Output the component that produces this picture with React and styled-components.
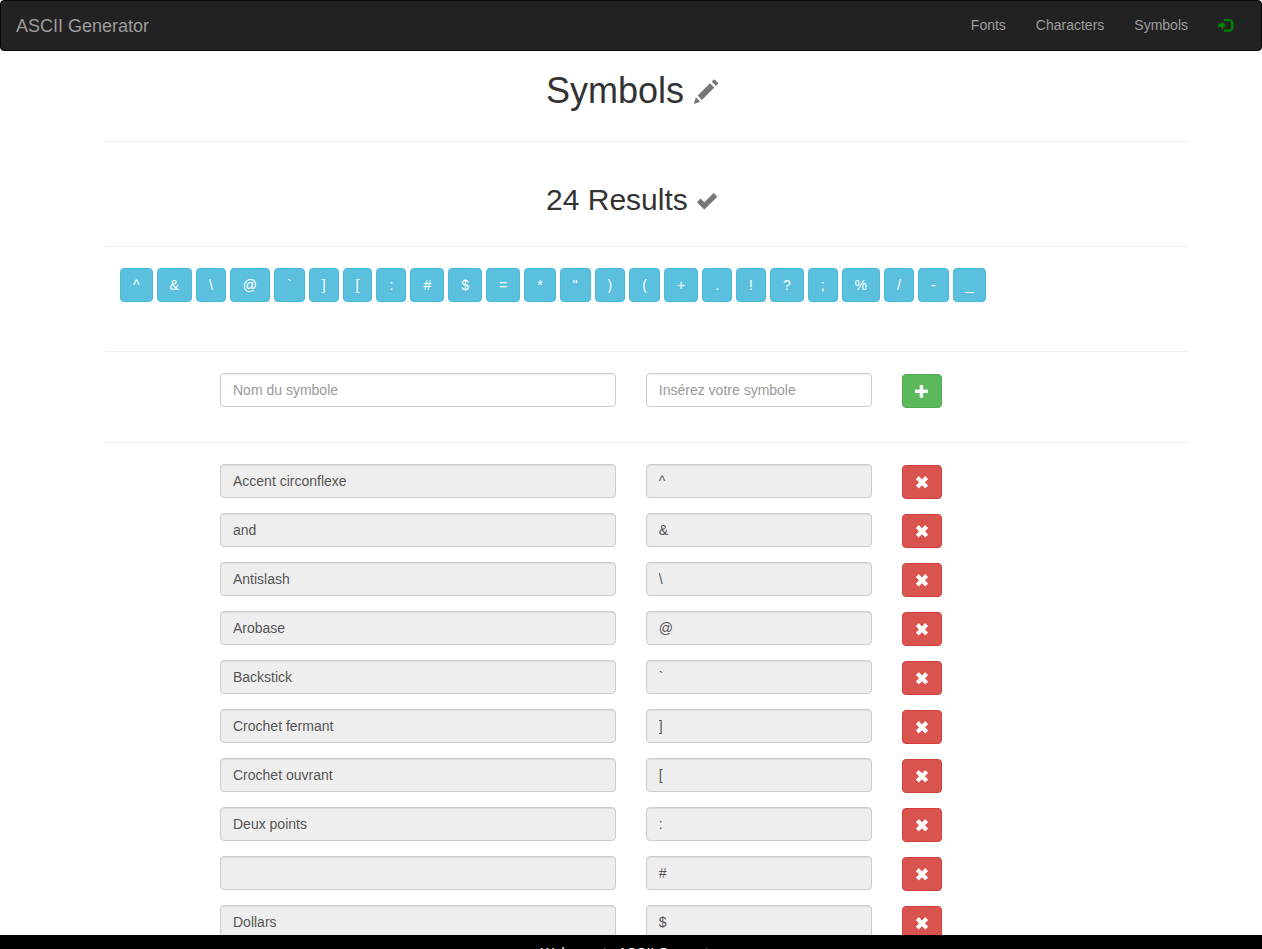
import React from 'react';
import styled, { createGlobalStyle } from 'styled-components';

const GlobalStyle = createGlobalStyle`
  * { box-sizing: border-box; }
  body {
    margin: 0;
    font-family: "Liberation Sans", Arial, sans-serif;
    font-size: 14px;
    line-height: 20px;
    color: #333;
    background: #fff;
  }
  button, input { font: inherit; }
`;

const Page = styled.div`
  display: flex;
  flex-direction: column;
  height: 100vh;
`;

const Navbar = styled.nav`
  display: flex;
  flex: none;
  align-items: center;
  justify-content: space-between;
  min-height: 51px;
  padding: 0 14px 0 15px;
  background: #222;
  border: 1px solid #080808;
  border-radius: 4px;
`;

const Brand = styled.a`
  font-size: 18px;
  color: #9d9d9d;
  text-decoration: none;
`;

const NavList = styled.ul`
  display: flex;
  align-self: flex-start;
  margin: 0;
  padding: 0;
  list-style: none;
`;

const NavLink = styled.a`
  display: flex;
  align-items: center;
  height: 48px;
  padding: 0 15px;
  color: ${(p) => p.$color || '#9d9d9d'};
  text-decoration: none;
`;

const Main = styled.main`
  flex: 1;
  min-height: 0;
  overflow-y: auto;
  scrollbar-width: none;
  padding: 20px 74px 0 105px;
`;

const Heading = styled.h1`
  margin: 0 0 30px;
  padding-left: 441px;
  font-size: 36px;
  font-weight: 500;
  line-height: 40px;
`;

const SubHeading = styled(Heading).attrs({ as: 'h2' })`
  margin: 40px 0 28px;
  font-size: 30px;
  line-height: 36px;
`;

const Divider = styled.hr`
  height: 1px;
  margin: 0;
  border: 0;
  background: #eee;
`;

const Glyph = styled.svg`
  flex: none;
  width: ${(p) => p.$size}px;
  height: ${(p) => p.$size}px;
  overflow: visible;
  fill: ${(p) => p.$color || 'currentColor'};
  vertical-align: -1px;
`;

const Palette = styled.div`
  display: flex;
  flex-wrap: wrap;
  gap: 4px;
  padding: 21px 15px 49px;
`;

const Button = styled.button`
  height: 34px;
  padding: 6px 12px;
  border: 1px solid ${(p) => p.$border};
  border-radius: 4px;
  background: ${(p) => p.$fill};
  color: #fff;
  line-height: 20px;
  cursor: pointer;
`;

const IconButton = styled(Button)`
  display: flex;
  align-items: center;
  justify-content: center;
  width: 40px;
  margin-top: 1px;
`;

const SymbolRow = styled.form`
  display: grid;
  grid-template-columns: 7fr 4fr 40px;
  column-gap: 30px;
  align-items: start;
  height: 49px;
  padding: 0 246px 0 115px;
`;

const AddSection = styled.section`
  padding: 21px 0 20px;
`;

const ListSection = styled.section`
  padding-top: 21px;
`;

const Field = styled.input`
  width: 100%;
  min-width: 0;
  height: 34px;
  padding: 6px 12px;
  border: 1px solid #ccc;
  border-radius: 4px;
  background: #fff;
  color: #555;
  line-height: 20px;
  box-shadow: inset 0 1px 1px rgba(0, 0, 0, 0.075);
  &::placeholder { color: #999; opacity: 1; }
  &:read-only { background: #eee; }
`;

const Footer = styled.footer`
  flex: none;
  height: 14px;
  padding-top: 8px;
  overflow: hidden;
  background: #000;
  color: #fff;
  text-align: center;
`;

const GLYPHS = {
  pencil: 'M1011 1210q19 0 33 -13l153 -153q13 -14 13 -33t-13 -33l-99 -92l-214 214l95 96q13 14 32 14zM1013 800l-615 -614l-214 214l614 614zM317 96l-333 -112l110 335z',
  ok: 'M1070 1050l195 -195q12 -15 0 -30l-745 -745q-20 -18 -40 0l-415 415q-15 15 0 30l190 190q15 15 30 0l215 -215l540 550q15 15 30 0z',
  plus: 'M450 1100h200q21 0 35.5 -14.5t14.5 -35.5v-350h350q21 0 35.5 -14.5t14.5 -35.5v-200q0 -21 -14.5 -35.5t-35.5 -14.5h-350v-350q0 -21 -14.5 -35.5t-35.5 -14.5h-200q-21 0 -35.5 14.5t-14.5 35.5v350h-350q-21 0 -35.5 14.5t-14.5 35.5v200q0 21 14.5 35.5t35.5 14.5h350v350q0 21 14.5 35.5t35.5 14.5z',
  remove: 'M340 1065l260 -260l260 260q15 15 30 0l225 -225q15 -15 0 -30l-260 -260l260 -260q15 -15 0 -30l-225 -225q-15 -15 -30 0l-260 260l-260 -260q-15 -15 -30 0l-225 225q-15 15 0 30l260 260l-260 260q-15 15 0 30l225 225q15 15 30 0z',
  login: 'M550 1100h400q165 0 282.5 -117.5t117.5 -282.5v-300q0 -165 -117.5 -282.5t-282.5 -117.5h-400q-21 0 -35.5 14.5t-14.5 35.5v100q0 21 14.5 35.5t35.5 14.5h450q41 0 70.5 29.5t29.5 70.5v500q0 41 -29.5 70.5t-70.5 29.5h-450q-21 0 -35.5 14.5t-14.5 35.5v100q0 21 14.5 35.5t35.5 14.5zM338 867l324 -284q16 -14 16 -33t-16 -33l-324 -284q-16 -14 -27 -9t-11 26v150h-250q-21 0 -35.5 14.5t-14.5 35.5v200q0 21 14.5 35.5t35.5 14.5h250v150q0 21 11 26t27 -9z',
};

function Icon({ name, size = 14, color }) {
  return (
    <Glyph $size={size} $color={color} viewBox="0 0 1200 1200" aria-hidden="true">
      <path d={GLYPHS[name]} transform="translate(0 1180) scale(1 -1)" />
    </Glyph>
  );
}

const PALETTE = ['^', '&', '\\', '@', '`', ']', '[', ':', '#', '$', '=', '*', '"', ')', '(', '+', '.', '!', '?', ';', '%', '/', '-', '_'];

const SYMBOLS = [
  ['Accent circonflexe', '^'],
  ['and', '&'],
  ['Antislash', '\\'],
  ['Arobase', '@'],
  ['Backstick', '`'],
  ['Crochet fermant', ']'],
  ['Crochet ouvrant', '['],
  ['Deux points', ':'],
  ['', '#'],
  ['Dollars', '$'],
];

export default function App() {
  return (
    <Page>
      <GlobalStyle />
      <Navbar>
        <Brand href="#">ASCII Generator</Brand>
        <NavList>
          <li><NavLink href="#fonts">Fonts</NavLink></li>
          <li><NavLink href="#characters">Characters</NavLink></li>
          <li><NavLink href="#symbols">Symbols</NavLink></li>
          <li><NavLink href="#login" aria-label="Login" $color="green"><Icon name="login" /></NavLink></li>
        </NavList>
      </Navbar>
      <Main>
        <Heading>Symbols <Icon name="pencil" size={24} color="#777" /></Heading>
        <Divider />
        <SubHeading>{PALETTE.length} Results <Icon name="ok" size={20} color="#777" /></SubHeading>
        <Divider />
        <Palette>
          {PALETTE.map((s) => (
            <Button key={s} type="button" $fill="#5bc0de" $border="#46b8da">{s}</Button>
          ))}
        </Palette>
        <Divider />
        <AddSection>
          <SymbolRow onSubmit={(e) => e.preventDefault()}>
            <Field aria-label="Nom du symbole" placeholder="Nom du symbole" />
            <Field aria-label="Symbole" placeholder="Insérez votre symbole" />
            <IconButton aria-label="Ajouter" $fill="#5cb85c" $border="#4cae4c"><Icon name="plus" /></IconButton>
          </SymbolRow>
        </AddSection>
        <Divider />
        <ListSection>
          {SYMBOLS.map(([name, symbol]) => (
            <SymbolRow key={symbol} onSubmit={(e) => e.preventDefault()}>
              <Field aria-label="Nom" readOnly value={name} />
              <Field aria-label="Symbole" readOnly value={symbol} />
              <IconButton aria-label="Supprimer" $fill="#d9534f" $border="#d43f3a"><Icon name="remove" /></IconButton>
            </SymbolRow>
          ))}
        </ListSection>
      </Main>
      <Footer>Welcome to ASCII Generator</Footer>
    </Page>
  );
}
